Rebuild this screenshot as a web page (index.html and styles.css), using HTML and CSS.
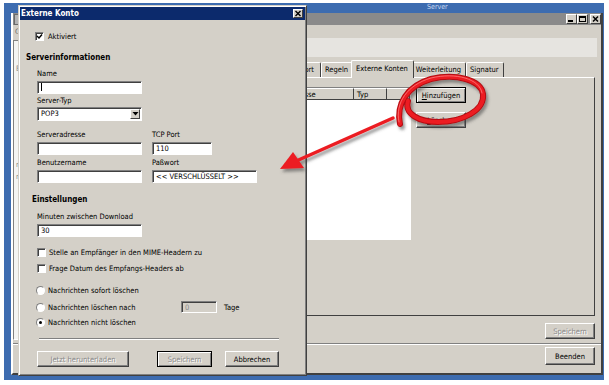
FILE: index.html
```html
<!DOCTYPE html>
<html lang="de">

<head>
  <meta charset="UTF-8">
  <title>Externe Konto</title>
  <link rel="stylesheet" href="styles.css">
</head>

<body>
  <div class="desk">
    <div class="desk-title">Server</div>

    <div class="mdi">
      <div class="mdi-title">
        <span class="mdi-icon"></span>
        <span class="caption-btns">
          <span class="cbtn">
            <svg width="9" height="8" viewBox="0 0 9 8"><rect x="1" y="5" width="5" height="2" fill="#000" /></svg>
          </span>
          <span class="cbtn">
            <svg width="9" height="8" viewBox="0 0 9 8"><rect x="1.5" y="1.5" width="6" height="5" fill="none" stroke="#000" /><rect x="1" y="1" width="7" height="2" fill="#000" /></svg>
          </span>
          <span class="cbtn cbtn-close">
            <svg width="9" height="8" viewBox="0 0 9 8"><path d="M2 1.5 L7 6.5 M7 1.5 L2 6.5" stroke="#000" stroke-width="1.5" /></svg>
          </span>
        </span>
      </div>

      <div class="menubar"><span>C</span></div>

      <div class="mdi-body">
        <div class="sidepane">
          <div class="side-item">E</div>
          <div class="side-item side-gap">m</div>
          <div class="side-item">m</div>
        </div>

        <div class="main">
          <div class="banner"></div>

          <div class="tabs">
            <span class="tab">Passwort</span>
            <span class="tab">Regeln</span>
            <span class="tab tab-active">Externe Konten</span>
            <span class="tab">Weiterleitung</span>
            <span class="tab">Signatur</span>
          </div>

          <div class="tabpage">
            <div class="list">
              <div class="list-head">
                <span class="col col-addr">Adresse</span>
                <span class="col col-typ">Typ</span>
                <span class="col col-x"></span>
              </div>
            </div>
            <div class="side-btns">
              <button class="btn btn-default"><u>H</u>inzufügen</button>
              <button class="btn"><u>L</u>öschen</button>
            </div>
          </div>

          <div class="save-row">
            <button class="btn btn-wide" disabled>Speichern</button>
          </div>
        </div>
      </div>

      <div class="mdi-foot">
        <button class="btn btn-wide btn-tall">Beenden</button>
      </div>
    </div>

    <div class="dlg">
      <div class="dlg-title">
        <span>Externe Konto</span>
        <span class="dlg-close">
          <svg width="8" height="7" viewBox="0 0 8 7"><path d="M1.5 1 L6.5 6 M6.5 1 L1.5 6" stroke="#000" stroke-width="1.4" /></svg>
        </span>
      </div>

      <div class="check check-top">
        <span class="box">
          <svg width="7" height="7" viewBox="0 0 7 7"><path d="M1 3 L3 5 L6 1.5" fill="none" stroke="#000" stroke-width="1.4" /></svg>
        </span>
        Aktiviert
      </div>

      <div class="group-title">Serverinformationen</div>

      <div class="field-row row-name">
        <div class="field">
          <div class="lbl">Name</div>
          <div class="input"><span class="caret"></span></div>
        </div>
      </div>

      <div class="field-row row-type">
        <div class="field">
          <div class="lbl">Server-Typ</div>
          <div class="input select">
            POP3
            <span class="drop">
              <svg width="7" height="4" viewBox="0 0 7 4"><path d="M0.5 0 L6.5 0 L3.5 3.5 Z" fill="#000" /></svg>
            </span>
          </div>
        </div>
      </div>

      <div class="field-row row-addr">
        <div class="field">
          <div class="lbl">Serveradresse</div>
          <div class="input"></div>
        </div>
        <div class="field">
          <div class="lbl">TCP Port</div>
          <div class="input input-port">110</div>
        </div>
      </div>

      <div class="field-row row-user">
        <div class="field">
          <div class="lbl">Benutzername</div>
          <div class="input"></div>
        </div>
        <div class="field">
          <div class="lbl">Paßwort</div>
          <div class="input">&lt;&lt; VERSCHLÜSSELT &gt;&gt;</div>
        </div>
      </div>

      <div class="group-title group-settings">Einstellungen</div>

      <div class="field-row row-minutes">
        <div class="field">
          <div class="lbl">Minuten zwischen Download</div>
          <div class="input">30</div>
        </div>
      </div>

      <div class="check check-mime"><span class="box"></span>Stelle an Empfänger in den MIME-Headern zu</div>
      <div class="check check-date"><span class="box"></span>Frage Datum des Empfangs-Headers ab</div>

      <div class="radio radio-first"><span class="dot"></span>Nachrichten sofort löschen</div>
      <div class="radio radio-days">
        <span class="dot"></span>
        <span class="radio-text">Nachrichten löschen nach</span>
        <span class="input input-days">0</span>
        <span class="days">Tage</span>
      </div>
      <div class="radio radio-last"><span class="dot dot-on"></span>Nachrichten nicht löschen</div>

      <div class="sep"></div>

      <div class="dlg-btns">
        <button class="btn btn-fetch" disabled>Jetzt herunterladen</button>
        <button class="btn btn-default btn-save" disabled>Speichern</button>
        <button class="btn btn-cancel">Abbrechen</button>
      </div>
    </div>
  </div>

  <svg class="marks" width="609" height="385" viewBox="0 0 609 385">
    <defs>
      <filter id="shade" x="-20%" y="-20%" width="140%" height="140%">
        <feDropShadow dx="2" dy="3" stdDeviation="1.5" flood-color="#444" flood-opacity="0.55" />
      </filter>
    </defs>
    <g filter="url(#shade)">
      <path d="M400 124 C396 104, 407 86, 431 79 C456 73, 481 80, 483 94 C485 110, 463 122, 438 122 C419 122, 404 114, 408 101" fill="none" stroke="#b30d12" stroke-width="6" stroke-linecap="round" />
      <path d="M400 124 C396 104, 407 86, 431 79 C456 73, 481 80, 483 94 C485 110, 463 122, 438 122 C419 122, 404 114, 408 101" fill="none" stroke="#ec1c22" stroke-width="4" stroke-linecap="round" />
      <path d="M399 122 C395 103, 407 85, 431 78 C456 72, 480 79, 482 93" fill="none" stroke="#ff8a8a" stroke-width="1" stroke-linecap="round" opacity="0.7" />
      <line x1="393" y1="118" x2="294" y2="162" stroke="#ec1c22" stroke-width="3.5" stroke-linecap="round" />
      <polygon points="280,169 293,152 304,168" fill="#ec1c22" />
    </g>
  </svg>
</body>

</html>
```

FILE: styles.css
```css
body {
  margin: 0;
  position: relative;
  width: 609px;
  height: 385px;
  overflow: hidden;
  background: #fff;
  font-family: "DejaVu Sans Condensed", "Liberation Sans", sans-serif;
  font-size: 7.5px;
  color: #000;
}

button {
  font: inherit;
}

/* background application */

.desk {
  position: relative;
  margin: 3px 5px 0 4px;
  width: 600px;
  height: 377px;
  box-sizing: border-box;
  padding: 0 1px 5px 7px;
  display: flex;
  flex-direction: column;
  background: #3d6cb0;
}

.desk-title {
  height: 10px;
  line-height: 9px;
  padding-left: 416px;
  color: #c9d8ef;
  font-size: 7px;
}

.mdi {
  flex: 1;
  display: flex;
  flex-direction: column;
  background: #d4d0c8;
  border-right: 2px solid #404040;
  border-left: 2px solid #fff;
  border-bottom: 2px solid #404040;
}

.mdi-title {
  height: 12px;
  display: flex;
  align-items: center;
  justify-content: space-between;
  background: #8a8a8a;
}

.mdi-icon {
  width: 7px;
  height: 9px;
  margin-left: 1px;
  background: #b4b4b4;
  border: 1px solid #6a6a6a;
}

.caption-btns {
  display: flex;
}

.cbtn {
  width: 11px;
  height: 10px;
  box-sizing: border-box;
  display: flex;
  align-items: center;
  justify-content: center;
  background: #d4d0c8;
  border: 1px solid;
  border-color: #fff #404040 #404040 #fff;
}

.cbtn-close {
  margin-left: 2px;
}

.menubar {
  height: 13px;
  line-height: 13px;
  padding-left: 2px;
  color: #6a6a6a;
}

.mdi-body {
  flex: 1;
  display: flex;
}

.sidepane {
  width: 250px;
  margin: 2px 4px 2px 0;
  padding: 22px 0 0 2px;
  box-sizing: border-box;
  background: #f4f4f2;
  border: 1px solid;
  border-color: #808080 #fff #fff #808080;
  color: #888;
}

.side-item {
  line-height: 12px;
}

.side-gap {
  margin-top: 84px;
}

.main {
  flex: 1;
  display: flex;
  flex-direction: column;
}

.banner {
  height: 19px;
  margin-right: 4px;
  background: #e6e4e0;
}

.tabs {
  height: 17px;
  margin-top: 3px;
  padding-left: 13px;
  display: flex;
  align-items: flex-end;
}

.tab {
  height: 15px;
  line-height: 14px;
  padding: 0 4px 0 3px;
  box-sizing: border-box;
  border-top: 1px solid #fff;
  border-left: 1px solid #fff;
  border-right: 1px solid #404040;
  border-radius: 2px 2px 0 0;
  white-space: nowrap;
}

.tab:first-child {
  padding-right: 6px;
}

.tab-active {
  position: relative;
  height: 18px;
  line-height: 16px;
  margin: 0 -2px -1px;
  padding: 0 5px 0 4px;
  background: #d4d0c8;
}

.tabpage {
  height: 239px;
  margin-right: 6px;
  box-sizing: border-box;
  padding: 9px 0 0 9px;
  display: flex;
  align-items: flex-start;
  gap: 5px;
  border: 1px solid;
  border-color: #fff #404040 #404040 #fff;
}

.list {
  flex: 1;
  height: 153px;
  box-sizing: border-box;
  background: #fff;
  border: 1px solid;
  border-color: #808080 #fff #fff #808080;
}

.list-head {
  display: flex;
  height: 12px;
  line-height: 11px;
}

.col {
  box-sizing: border-box;
  padding-left: 3px;
  background: #d4d0c8;
  border-right: 1px solid #404040;
  border-bottom: 1px solid #404040;
  border-top: 1px solid #fff;
}

.col-addr {
  flex: 1;
  padding-left: 11px;
}

.col-typ {
  width: 33px;
}

.col-x {
  width: 23px;
}

.side-btns {
  width: 50px;
  margin-right: 128px;
  display: flex;
  flex-direction: column;
  gap: 9px;
}

.save-row,
.mdi-foot {
  display: flex;
  justify-content: flex-end;
  padding-right: 6px;
}

.save-row {
  margin-top: 7px;
}

.mdi-foot {
  margin-top: 1px;
  padding-top: 3px;
  padding-bottom: 8px;
  border-top: 1px solid #808080;
  box-shadow: inset 0 1px #fff;
}

/* buttons and inputs */

.btn {
  height: 16px;
  padding: 0;
  box-sizing: border-box;
  background: #d4d0c8;
  color: #000;
  border: 1px solid;
  border-color: #fff #404040 #404040 #fff;
  box-shadow: inset -1px -1px #808080;
  border-radius: 0;
}

.btn:disabled {
  color: #8a8a8a;
  text-shadow: 1px 1px #fff;
}

.btn-default {
  border: 1px solid #000;
  box-shadow: inset 1px 1px #fff, inset -1px -1px #808080;
}

.btn-wide {
  width: 50px;
}

.btn-tall {
  height: 18px;
}

.input {
  height: 13px;
  line-height: 11px;
  padding-left: 3px;
  box-sizing: border-box;
  background: #fff;
  border: 1px solid;
  border-color: #808080 #fff #fff #808080;
  box-shadow: inset 1px 1px #404040;
  white-space: nowrap;
}

/* dialog */

.dlg {
  position: absolute;
  z-index: 2;
  left: 14px;
  top: 2px;
  width: 289px;
  height: 371px;
  box-sizing: border-box;
  padding: 1px;
  background: #d4d0c8;
  border: 1px solid;
  border-color: #d4d0c8 #404040 #404040 #d4d0c8;
  box-shadow: inset 1px 1px #fff, inset -1px -1px #808080;
}

.dlg-title {
  height: 13px;
  display: flex;
  align-items: center;
  justify-content: space-between;
  padding-left: 1px;
  background: #0c2a6c;
  color: #fff;
  font-weight: bold;
  font-size: 8px;
}

.dlg-close {
  width: 10px;
  height: 9px;
  margin-right: 2px;
  box-sizing: border-box;
  display: flex;
  align-items: center;
  justify-content: center;
  background: #d4d0c8;
  border: 1px solid;
  border-color: #fff #404040 #404040 #fff;
}

.group-title {
  margin: 12px 0 0 6px;
  line-height: 10px;
  font-weight: bold;
  font-size: 8px;
}

.group-settings {
  margin-left: 12px;
}

.field-row {
  display: flex;
  gap: 10px;
  margin-left: 17px;
}

.field {
  width: 105px;
}

.lbl {
  line-height: 10px;
}

.field .input {
  margin-top: 2px;
}

.row-name {
  margin-top: 6px;
}

.row-type {
  margin-top: 2px;
}

.row-type .input {
  margin-top: 1px;
  height: 14px;
  line-height: 12px;
  position: relative;
}

.row-addr {
  margin-top: 9px;
}

.row-user {
  margin-top: 3px;
}

.row-minutes {
  margin-top: 7px;
}

.input-port {
  width: 60px;
}

.caret {
  display: inline-block;
  width: 1px;
  height: 8px;
  margin-top: 1px;
  vertical-align: top;
  background: #000;
}

.drop {
  position: absolute;
  right: 1px;
  top: 1px;
  width: 10px;
  height: 10px;
  box-sizing: border-box;
  display: flex;
  align-items: center;
  justify-content: center;
  background: #d4d0c8;
  border: 1px solid;
  border-color: #fff #404040 #404040 #fff;
}

.check,
.radio {
  display: flex;
  align-items: center;
  gap: 3px;
  height: 10px;
  margin-left: 17px;
}

.check-top {
  margin: 11px 0 0 15px;
  gap: 4px;
}

.check-mime {
  margin-top: 10px;
}

.check-date {
  margin-top: 6px;
}

.box {
  width: 9px;
  height: 9px;
  box-sizing: border-box;
  display: flex;
  align-items: center;
  justify-content: center;
  background: #fff;
  border: 1px solid;
  border-color: #808080 #fff #fff #808080;
  box-shadow: inset 1px 1px #404040;
}

.radio {
  margin-left: 16px;
}

.radio-first {
  margin-top: 12px;
}

.radio-days {
  margin-top: 6px;
  height: 12px;
}

.radio-last {
  margin-top: 4px;
}

.dot {
  width: 9px;
  height: 9px;
  box-sizing: border-box;
  border-radius: 50%;
  background: #fff;
  border: 1px solid;
  border-color: #808080 #fff #fff #808080;
  display: flex;
  align-items: center;
  justify-content: center;
}

.dot-on::after {
  content: "";
  width: 3px;
  height: 3px;
  border-radius: 50%;
  background: #000;
}

.radio-text {
  width: 130px;
}

.input-days {
  width: 36px;
  height: 12px;
  background: #d4d0c8;
  color: #8a8a8a;
}

.days {
  margin-left: 4px;
}

.sep {
  width: 240px;
  margin: 11px 0 0 19px;
  border-top: 1px solid #808080;
  border-bottom: 1px solid #fff;
}

.dlg-btns {
  display: flex;
  margin: 11px 0 0 17px;
}

.btn-fetch {
  width: 92px;
}

.btn-save {
  width: 55px;
  margin-left: 28px;
}

.btn-cancel {
  width: 54px;
  margin-left: 13px;
}

.marks {
  position: absolute;
  z-index: 3;
  left: 0;
  top: 0;
  pointer-events: none;
}
```
